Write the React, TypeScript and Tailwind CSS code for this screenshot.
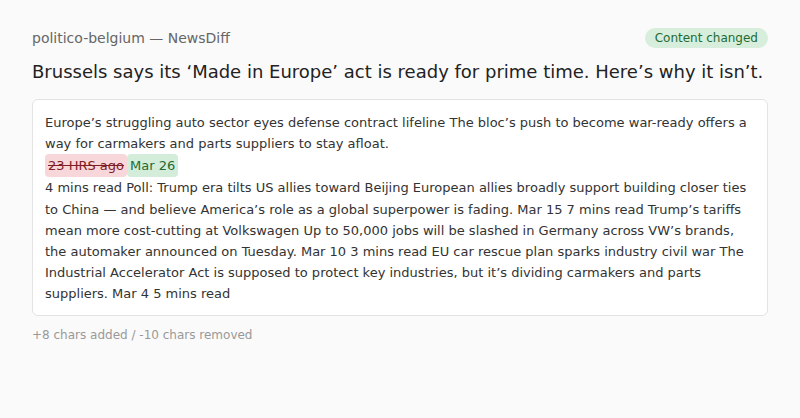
const App = () => {
  return (
    <div className="min-h-screen bg-[#fafafa] px-8 pt-7 text-[#333] font-['DejaVu_Sans',sans-serif]">
      {/* Header */}
      <div className="flex items-center justify-between h-5">
        <span className="text-sm text-[#666]">politico-belgium — NewsDiff</span>
        <span className="rounded-full bg-[#d6eedb] px-2.5 text-xs leading-5 text-[#1e6b34]">
          Content changed
        </span>
      </div>

      <h1 className="mt-[10px] text-lg leading-[27px] text-[#222]">
        Brussels says its ‘Made in Europe’ act is ready for prime time. Here’s why it isn’t.
      </h1>

      {/* Diff body */}
      <div className="mt-[14px] rounded-md border border-[#e3e3e3] bg-white px-3 pt-3 pb-[11px]">
        <p className="whitespace-pre-wrap text-[13px] leading-relaxed text-[#333]">
          {'Europe’s struggling auto sector eyes defense contract lifeline The bloc’s push to become war-ready offers a way for carmakers and parts suppliers to stay afloat.\n'}
          <del className="inline-block rounded-sm bg-[#f8d7da] px-[3px] py-[1px] text-[#7f1d24] line-through">23 HRS ago</del>
          <ins className="inline-block rounded-sm bg-[#d4edda] px-[3px] py-[1px] text-[#1e6b34] no-underline">Mar 26</ins>
          {'\n4 mins read Poll: Trump era tilts US allies toward Beijing European allies broadly support building closer ties to China — and believe America’s role as a global superpower is fading. Mar 15 7 mins read Trump’s tariffs mean more cost-cutting at Volkswagen Up to 50,000 jobs will be slashed in Germany across VW’s brands, the automaker announced on Tuesday. Mar 10 3 mins read EU car rescue plan sparks industry civil war The Industrial Accelerator Act is supposed to protect key industries, but it’s dividing carmakers and parts suppliers. Mar 4 5 mins read'}
        </p>
      </div>

      <p className="mt-[10px] text-xs leading-[18px] text-[#999]">+8 chars added / -10 chars removed</p>
    </div>
  );
};

export default App;
